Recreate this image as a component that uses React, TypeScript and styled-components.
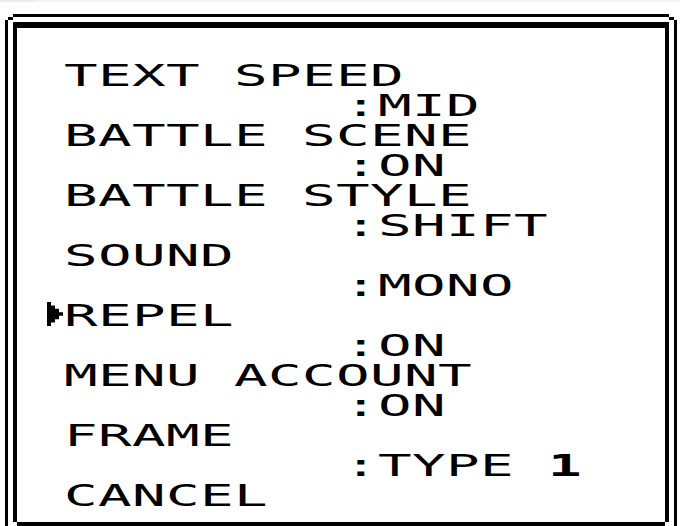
import styled, { createGlobalStyle } from "styled-components";

type Option = {
  label: string;
  value?: string;
  level?: string;
};

const options: Option[] = [
  { label: "TEXT SPEED", value: ":MID" },
  { label: "BATTLE SCENE", value: ":ON" },
  { label: "BATTLE STYLE", value: ":SHIFT" },
  { label: "SOUND", value: ":MONO" },
  { label: "REPEL", value: ":ON" },
  { label: "MENU ACCOUNT", value: ":ON" },
  { label: "FRAME", value: ":TYPE ", level: "1" },
  { label: "CANCEL" },
];

const SELECTED = 4;

// one tile = 34px across, 30px down
const TILE_W = 34;
const STRETCH = 1.8;
const FONT_SIZE = 31;

const GlobalStyle = createGlobalStyle`
  html,
  body {
    margin: 0;
    padding: 0;
    background: #ffffff;
  }
`;

export default function App() {
  return (
    <>
      <GlobalStyle />
      <Screen>
        <TopEdge />
        <OuterFrame>
          <InnerFrame>
            <Menu>
              {options.map((option, index) => (
                <OptionRow key={option.label}>
                  <CursorCell>
                    {index === SELECTED && <Cursor />}
                  </CursorCell>
                  <Label>
                    <Glyphs>{option.label}</Glyphs>
                  </Label>
                  <Value>
                    {option.value && (
                      <Glyphs>
                        {option.value}
                        {option.level && <Digit>{option.level}</Digit>}
                      </Glyphs>
                    )}
                  </Value>
                </OptionRow>
              ))}
            </Menu>
          </InnerFrame>
        </OuterFrame>
      </Screen>
    </>
  );
}

function Cursor() {
  return (
    <CursorIcon viewBox="0 0 4 7" preserveAspectRatio="none" aria-hidden="true">
      <polygon
        points="0,0 1,0 1,1 2,1 2,2 3,2 3,3 4,3 4,4 3,4 3,5 2,5 2,6 1,6 1,7 0,7"
        fill="#000000"
      />
    </CursorIcon>
  );
}

const Screen = styled.main`
  position: relative;
  box-sizing: border-box;
  width: 680px;
  height: 526px;
  overflow: hidden;
  padding: 0 3px 0 5px;
  background: #ffffff;
`;

const TopEdge = styled.div`
  height: 2px;
  margin: 0 -3px 12px -5px;
  background: linear-gradient(90deg, #ebebeb 0 34px, #f4f4f4 34px);
`;

const OuterFrame = styled.div`
  position: relative;
  box-sizing: border-box;
  height: 540px;
  padding: 5px;
  border: 3px solid #000000;

  &::before,
  &::after {
    content: "";
    position: absolute;
    top: -3px;
    width: 8px;
    height: 6px;
  }

  &::before {
    left: -3px;
    background:
      linear-gradient(#000, #000) 3px 3px / 5px 3px no-repeat,
      #ffffff;
  }

  &::after {
    right: -3px;
    background:
      linear-gradient(#000, #000) 0 3px / 5px 3px no-repeat,
      #ffffff;
  }
`;

const InnerFrame = styled.div`
  position: relative;
  box-sizing: border-box;
  height: 504px;
  border: 4px solid #000000;
  border-top-width: 6px;

  &::before {
    content: "";
    position: absolute;
    left: -4px;
    right: -4px;
    bottom: -4px;
    height: 4px;
    background:
      linear-gradient(#fff, #fff) 0 0 / 4px 4px no-repeat,
      linear-gradient(#fff, #fff) 100% 0 / 4px 4px no-repeat;
  }
`;

const Menu = styled.div`
  display: flex;
  flex-direction: column;
  padding: 32px 0 0 0;
  color: #000000;
  font-family: "DejaVu Sans Mono", "Liberation Mono", monospace;
  font-size: ${FONT_SIZE}px;
  line-height: 30px;
`;

const OptionRow = styled.div`
  display: grid;
  grid-template-columns: 47px 280px 1fr;
  grid-template-rows: 30px 30px;
`;

const CursorCell = styled.div`
  grid-column: 1;
  grid-row: 1;
  display: flex;
  justify-content: flex-end;
  align-items: flex-start;
  padding: 2px 1px 0 0;
`;

const CursorIcon = styled.svg`
  display: block;
  width: 16px;
  height: 24px;
`;

const Label = styled.div`
  grid-column: 2 / 4;
  grid-row: 1;
  white-space: nowrap;
`;

const Value = styled.div`
  grid-column: 3;
  grid-row: 2;
  white-space: nowrap;
`;

const Glyphs = styled.span`
  display: inline-block;
  white-space: pre;
  letter-spacing: ${TILE_W / STRETCH - FONT_SIZE * 0.602}px;
  transform: scaleX(${STRETCH});
  transform-origin: 0 0;
`;

const Digit = styled.span`
  font-weight: 700;
`;
